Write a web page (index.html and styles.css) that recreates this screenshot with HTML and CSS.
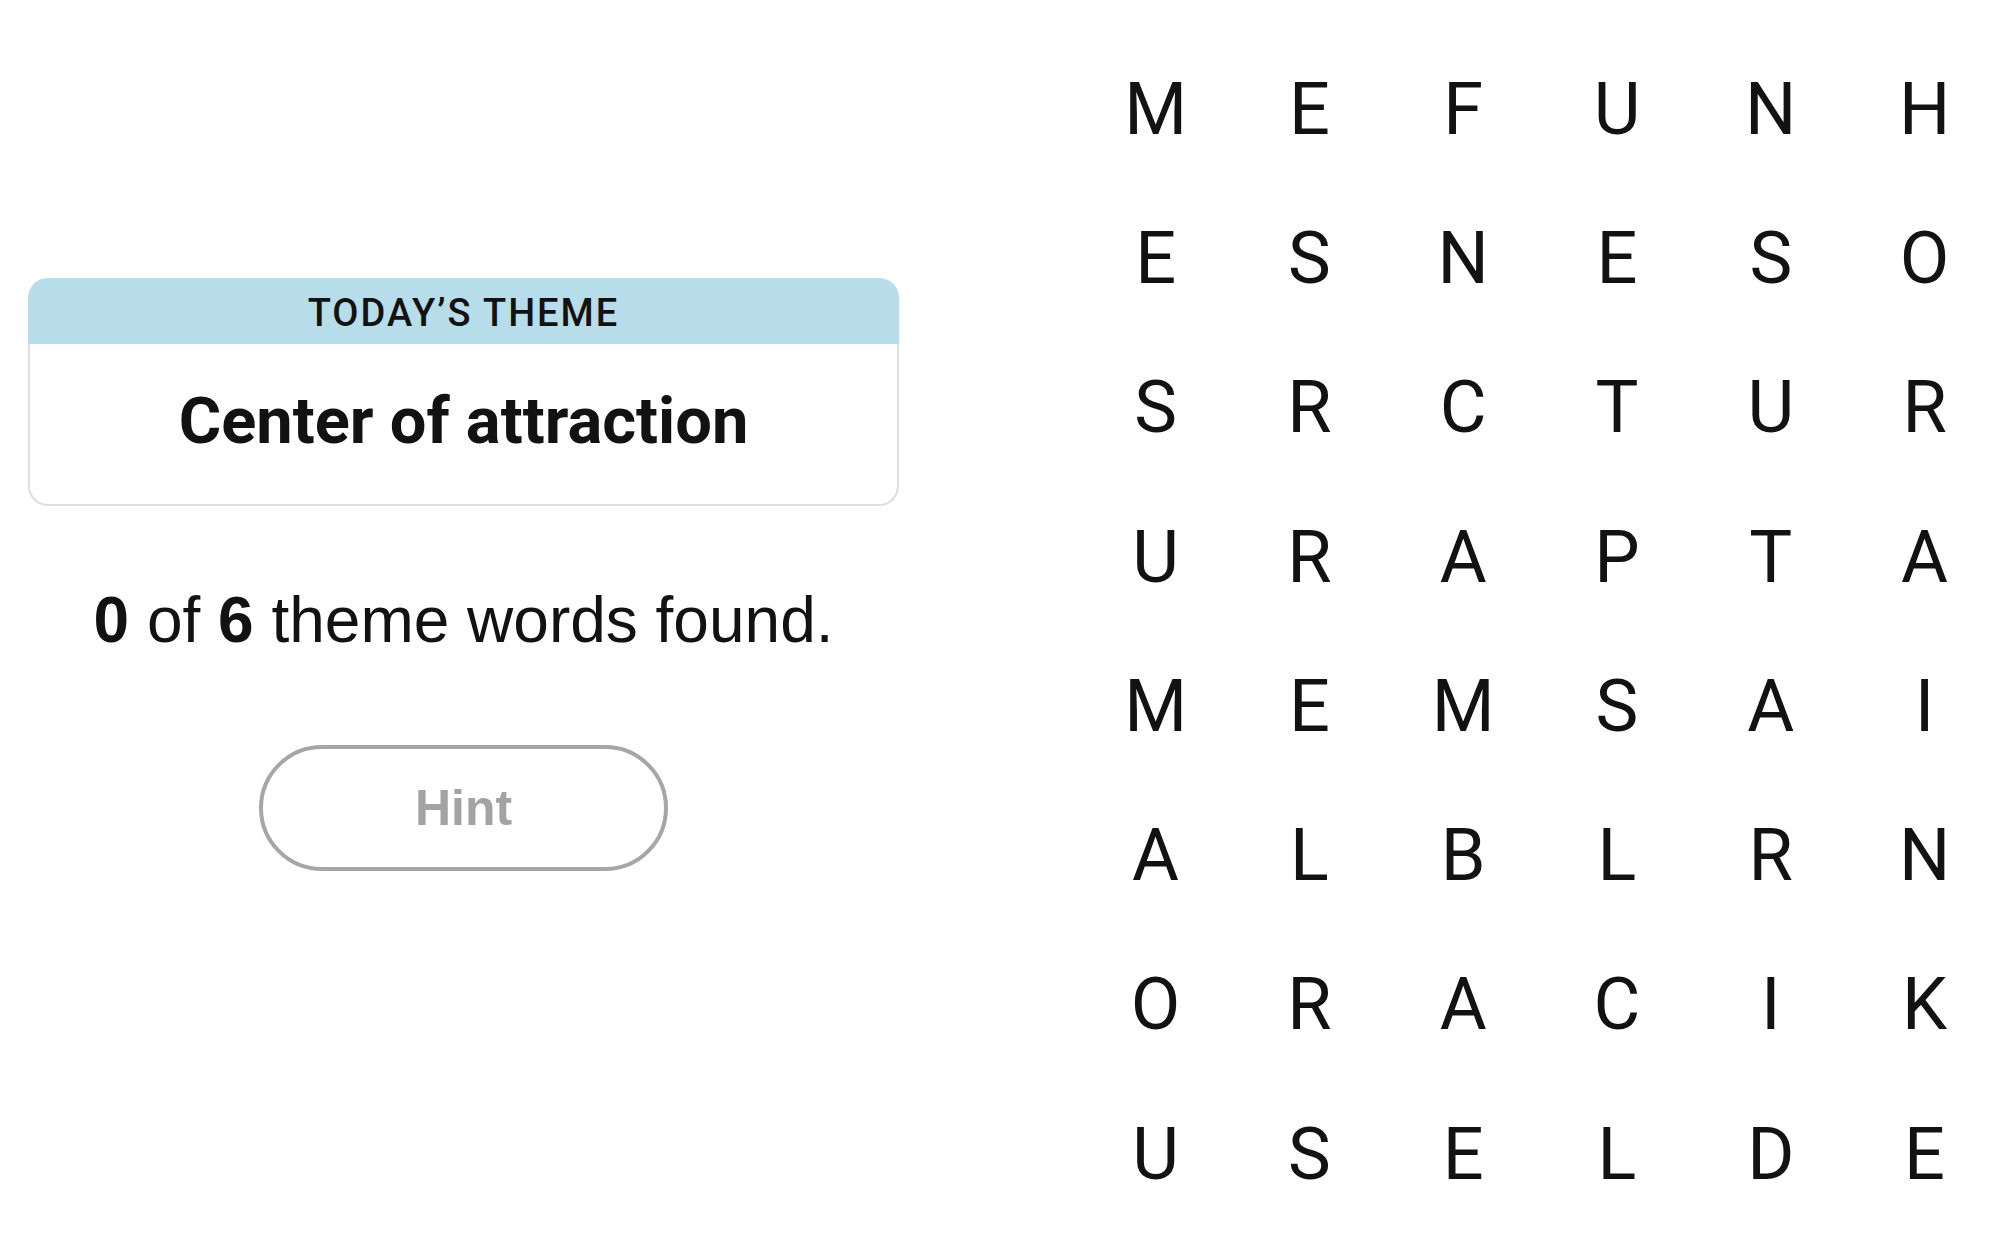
FILE: index.html
```html
<!DOCTYPE html>
<html lang="en">
<head>
<meta charset="utf-8">
<title>Strands</title>
<link rel="stylesheet" href="styles.css">
</head>
<body>
<main class="board">
  <section class="left">
    <div class="theme-card">
      <div class="theme-header">TODAY’S THEME</div>
      <div class="theme-body">Center of attraction</div>
    </div>
    <p class="count"><b>0</b> of <b>6</b> theme words found.</p>
    <button class="hint" type="button">Hint</button>
  </section>
  <section class="grid">
    <span class="cell">M</span><span class="cell">E</span><span class="cell">F</span><span class="cell">U</span><span class="cell">N</span><span class="cell">H</span>
    <span class="cell">E</span><span class="cell">S</span><span class="cell">N</span><span class="cell">E</span><span class="cell">S</span><span class="cell">O</span>
    <span class="cell">S</span><span class="cell">R</span><span class="cell">C</span><span class="cell">T</span><span class="cell">U</span><span class="cell">R</span>
    <span class="cell">U</span><span class="cell">R</span><span class="cell">A</span><span class="cell">P</span><span class="cell">T</span><span class="cell">A</span>
    <span class="cell">M</span><span class="cell">E</span><span class="cell">M</span><span class="cell">S</span><span class="cell">A</span><span class="cell">I</span>
    <span class="cell">A</span><span class="cell">L</span><span class="cell">B</span><span class="cell">L</span><span class="cell">R</span><span class="cell">N</span>
    <span class="cell">O</span><span class="cell">R</span><span class="cell">A</span><span class="cell">C</span><span class="cell">I</span><span class="cell">K</span>
    <span class="cell">U</span><span class="cell">S</span><span class="cell">E</span><span class="cell">L</span><span class="cell">D</span><span class="cell">E</span>
  </section>
</main>
</body>
</html>
```

FILE: styles.css
```css
html, body {
  margin: 0;
  padding: 0;
  background: #ffffff;
  overflow: hidden;
}

body {
  width: 2000px;
  height: 1237px;
  font-family: "Liberation Sans", Arial, sans-serif;
  color: #121212;
}

.board {
  display: flex;
  align-items: flex-start;
}

.left {
  width: 927px;
  flex: none;
  display: flex;
  flex-direction: column;
  align-items: center;
  padding-top: 278px;
}

.theme-card {
  width: 871px;
  display: flex;
  flex-direction: column;
}

.theme-header {
  box-sizing: border-box;
  height: 66px;
  padding-top: 3px;
  background: #b6dde9;
  border-radius: 20px 20px 0 0;
  display: flex;
  align-items: center;
  justify-content: center;
  font-family: Roboto, "Liberation Sans", sans-serif;
  font-size: 38px;
  font-weight: 500;
  letter-spacing: 2px;
  color: #121212;
}

.theme-body {
  box-sizing: border-box;
  height: 162px;
  border: 2px solid #dedede;
  border-top: none;
  border-radius: 0 0 20px 20px;
  display: flex;
  align-items: center;
  justify-content: center;
  padding-bottom: 6px;
  font-family: Roboto, "Liberation Sans", sans-serif;
  font-size: 65px;
  font-weight: 700;
}

.count {
  margin: 82px 0 0;
  font-size: 64px;
  line-height: 64px;
  font-weight: 400;
  color: #121212;
}

.count b {
  font-weight: 700;
}

.hint {
  margin-top: 93px;
  width: 409px;
  height: 126px;
  border: 4px solid #a6a6a6;
  border-radius: 63px;
  background: #ffffff;
  font-family: "Liberation Sans", Arial, sans-serif;
  font-size: 50px;
  font-weight: 700;
  color: #a3a3a3;
  display: flex;
  align-items: center;
  justify-content: center;
  padding: 0;
}

.grid {
  margin-left: 168.6px;
  padding-top: 60px;
  display: grid;
  grid-template-columns: repeat(6, 120px);
  grid-auto-rows: 100px;
  column-gap: 33.8px;
  row-gap: 49.24px;
}

.cell {
  display: block;
  text-align: center;
  font-family: Roboto, "Liberation Sans", sans-serif;
  font-size: 72px;
  line-height: 100px;
  font-weight: 400;
  color: #121212;
}
```
